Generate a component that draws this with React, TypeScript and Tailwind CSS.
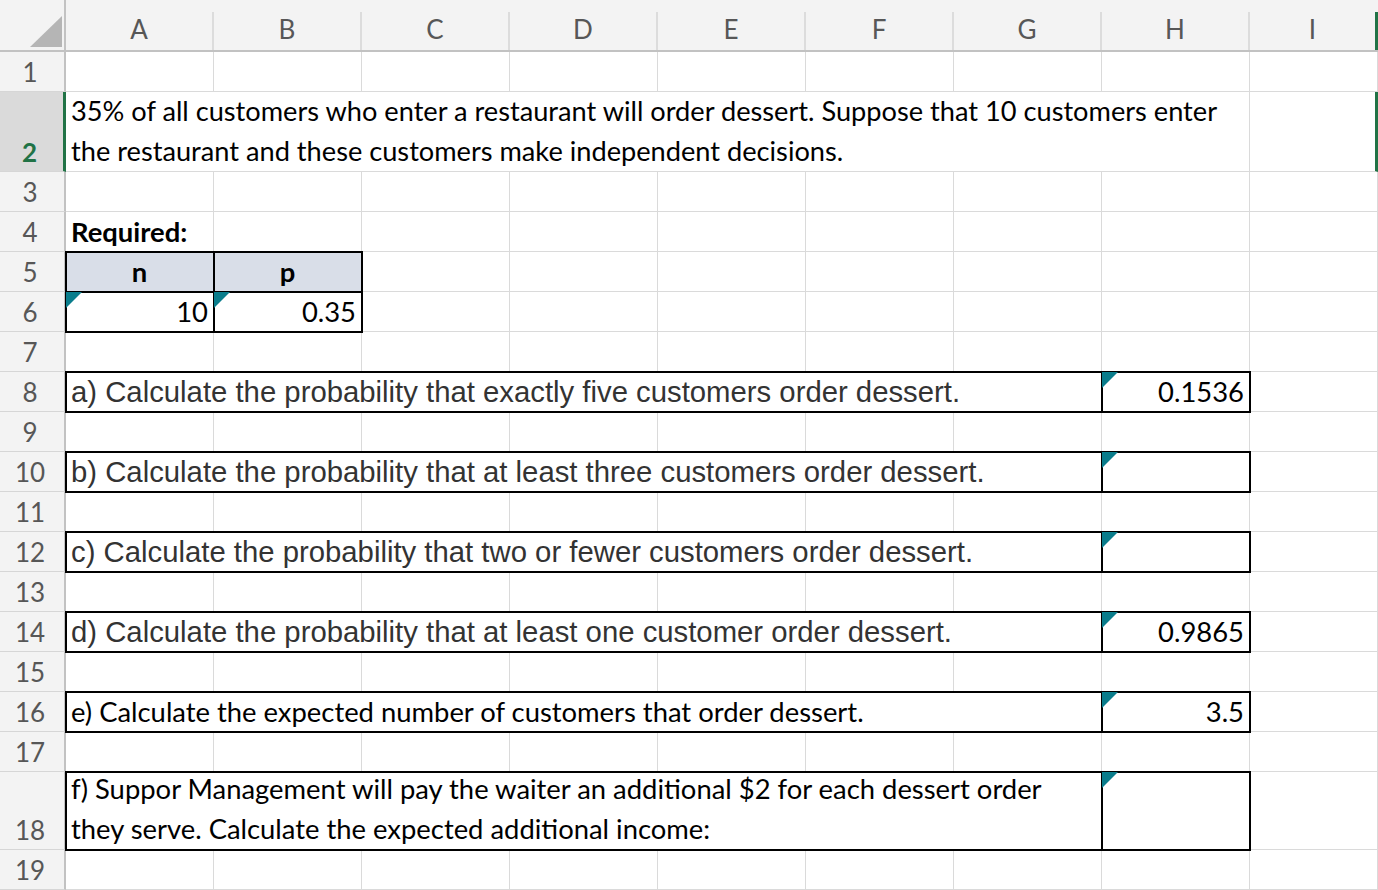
import React from "react";

const COLS = ["A", "B", "C", "D", "E", "F", "G", "H", "I"];
const calibri = "font-['Lato','Liberation_Sans',sans-serif]";
const arial = "font-['Liberation_Sans',Arial,sans-serif] text-[29.3px] text-[#333333]";

const Corner = () => (
  <svg className="absolute left-0 top-0" width="16" height="16" viewBox="0 0 16 16">
    <polygon points="0,0 16,0 0,16" fill="#0a7d8c" />
  </svg>
);

type CellProps = {
  span?: number;
  boxed?: boolean;
  corner?: boolean;
  className?: string;
  children?: React.ReactNode;
};

const Cell = ({ span = 1, boxed, corner, className = "", children }: CellProps) => {
  const spanCls =
    span === 7 ? "col-span-7" : span === 8 ? "col-span-8" : "col-span-1";
  return (
    <div
      className={`${spanCls} relative flex items-center whitespace-nowrap border-b border-r border-[#dadada] ${
        boxed ? "z-10 outline-2 -outline-offset-1 outline-black" : ""
      } ${className}`}
    >
      {corner && <Corner />}
      {children}
    </div>
  );
};

// row numbers sit at the bottom of tall rows, like Excel
const RowHead = ({ n, active }: { n: number; active?: boolean }) => (
  <div
    className={`flex items-end justify-center pb-[3px] pr-1 border-b border-[#d6d6d6] text-[26px] leading-[32px] ${calibri} ${
      active
        ? "bg-[#dadada] text-[#217346] font-bold border-r-[3px] border-r-[#217346]"
        : "bg-[#f3f3f3] text-[#575757] border-r-2 border-r-[#c2c2c2]"
    }`}
  >
    {n}
  </div>
);

const Empty = ({ count }: { count: number }) => (
  <>
    {Array.from({ length: count }).map((_, i) => (
      <Cell key={i} />
    ))}
  </>
);

const Question = ({
  text,
  value,
  font,
}: {
  text: React.ReactNode;
  value?: string;
  font: string;
}) => (
  <>
    <Cell span={7} boxed className={`pl-[5px] ${font}`}>
      {text}
    </Cell>
    <Cell boxed corner className={`justify-end pr-[5px] ${calibri}`}>
      {value}
    </Cell>
    <Cell />
  </>
);

export default function App() {
  return (
    <div className="h-[890px] w-[1378px] overflow-hidden bg-white text-black">
      <div className="grid grid-cols-[66px_repeat(8,148px)_128px] grid-rows-[52px_40px_80px_repeat(15,40px)_78px_40px] text-[27.4px]">
        {/* header row */}
        <div className="relative border-b-2 border-r-2 border-[#c2c2c2] bg-[#f3f3f3]">
          <svg className="absolute left-[30px] top-[16px]" width="32" height="31" viewBox="0 0 32 31">
            <polygon points="0,31 32,31 32,0" fill="#b5b5b5" />
          </svg>
        </div>
        {COLS.map((c, i) => (
          <div
            key={c}
            className={`flex items-center justify-center border-b-2 border-[#c2c2c2] bg-[#f3f3f3] text-[26px] text-[#575757] ${calibri}`}
          >
            <div
              className={`flex h-[38px] w-full items-center justify-center self-end pb-1 ${
                i < COLS.length - 1 ? "border-r-2 border-[#dcdcdc]" : "border-r-[3px] border-r-[#217346]"
              }`}
            >
              {c}
            </div>
          </div>
        ))}

        {/* 1 */}
        <RowHead n={1} />
        <Empty count={9} />

        {/* 2 */}
        <RowHead n={2} active />
        <Cell span={8} className={`items-end pl-[5px] text-[27.2px] leading-[40px] ${calibri}`}>
          <span>
            35% of all customers who enter a restaurant will order dessert. Suppose that 10 customers enter
            <br />
            the restaurant and these customers make independent decisions.
          </span>
        </Cell>
        <div className="border-b border-[#dadada] border-r-[3px] border-r-[#217346]" />

        {/* 3 */}
        <RowHead n={3} />
        <Empty count={9} />

        {/* 4 */}
        <RowHead n={4} />
        <Cell className={`pl-[5px] font-bold ${calibri}`}>Required:</Cell>
        <Empty count={8} />

        {/* 5 */}
        <RowHead n={5} />
        <Cell boxed className={`justify-center bg-[#d9dee8] font-bold ${calibri}`}>n</Cell>
        <Cell boxed className={`justify-center bg-[#d9dee8] font-bold ${calibri}`}>p</Cell>
        <Empty count={7} />

        {/* 6 */}
        <RowHead n={6} />
        <Cell boxed corner className={`justify-end pr-[5px] ${calibri}`}>10</Cell>
        <Cell boxed corner className={`justify-end pr-[5px] ${calibri}`}>0.35</Cell>
        <Empty count={7} />

        {/* 7 */}
        <RowHead n={7} />
        <Empty count={9} />

        {/* 8 */}
        <RowHead n={8} />
        <Question
          font={arial}
          text="a) Calculate the probability that exactly five customers order dessert."
          value="0.1536"
        />

        <RowHead n={9} />
        <Empty count={9} />

        <RowHead n={10} />
        <Question
          font={arial}
          text="b) Calculate the probability that at least three customers order dessert."
        />

        <RowHead n={11} />
        <Empty count={9} />

        <RowHead n={12} />
        <Question
          font={arial}
          text="c) Calculate the probability that two or fewer customers order dessert."
        />

        <RowHead n={13} />
        <Empty count={9} />

        <RowHead n={14} />
        <Question
          font={arial}
          text="d) Calculate the probability that at least one customer order dessert."
          value="0.9865"
        />

        <RowHead n={15} />
        <Empty count={9} />

        <RowHead n={16} />
        <Question
          font={calibri}
          text="e) Calculate the expected number of customers that order dessert."
          value="3.5"
        />

        <RowHead n={17} />
        <Empty count={9} />

        <RowHead n={18} />
        <Question
          font={`${calibri} leading-[40px] items-end`}
          text={
            <span>
              f) Suppor Management will pay the waiter an additional $2 for each dessert order
              <br />
              they serve. Calculate the expected additional income:
            </span>
          }
        />

        <RowHead n={19} />
        <Empty count={9} />
      </div>
    </div>
  );
}
